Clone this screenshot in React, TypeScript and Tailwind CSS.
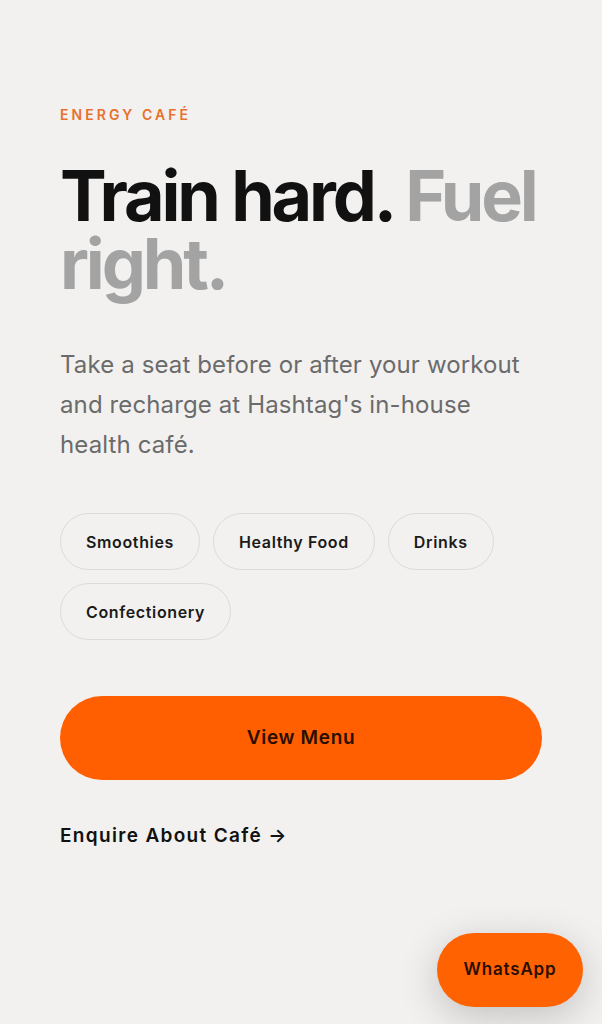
import React from "react";

const chips = ["Smoothies", "Healthy Food", "Drinks", "Confectionery"];

export default function App() {
  return (
    <div
      className="relative min-h-[1024px] w-full bg-[#f2f1ef] px-[60px] pt-[105px]"
      style={{ fontFamily: "Inter, 'Noto Sans', sans-serif" }}
    >
      <div className="text-[14px] leading-[20px] font-semibold tracking-[0.22em] text-[#e8702e]">
        ENERGY CAFÉ
      </div>
      <h1 className="mt-[37px] text-[70px] leading-[68px] font-bold tracking-[-0.045em] text-[#111111]">
        Train hard. <span className="text-[#a3a3a3]">Fuel right.</span>
      </h1>
      <p className="mt-[47px] text-[24px] leading-[40px] text-[#6b6b6b] tracking-[0.005em]">
        Take a seat before or after your workout
        <br />
        and recharge at Hashtag's in-house
        <br />
        health café.
      </p>
      <div className="mt-[48px] flex flex-wrap gap-[13px]">
        {chips.map((c) => (
          <div
            key={c}
            className="flex h-[57px] items-center rounded-full border border-[#dcdbd8] px-[25px] text-[16px] font-semibold tracking-[0.04em] text-[#1a1a1a]"
          >
            {c}
          </div>
        ))}
      </div>
      <button className="mt-[56px] flex h-[84px] w-full items-center justify-center rounded-full bg-[#ff5f00] text-[19px] font-semibold tracking-[0.035em] text-[#2a0f00]">
        View Menu
      </button>
      <div className="mt-[42px] text-[19px] leading-[28px] font-semibold tracking-[0.07em] text-[#111111]">
        Enquire About Café →
      </div>
      <div className="absolute left-[437px] top-[933px] flex h-[74px] w-[146px] items-center justify-center rounded-full bg-[#ff6200] text-[17px] font-semibold tracking-[0.05em] text-[#2a0f00] shadow-[0_10px_40px_rgba(0,0,0,0.2)]">
        WhatsApp
      </div>
    </div>
  );
}
